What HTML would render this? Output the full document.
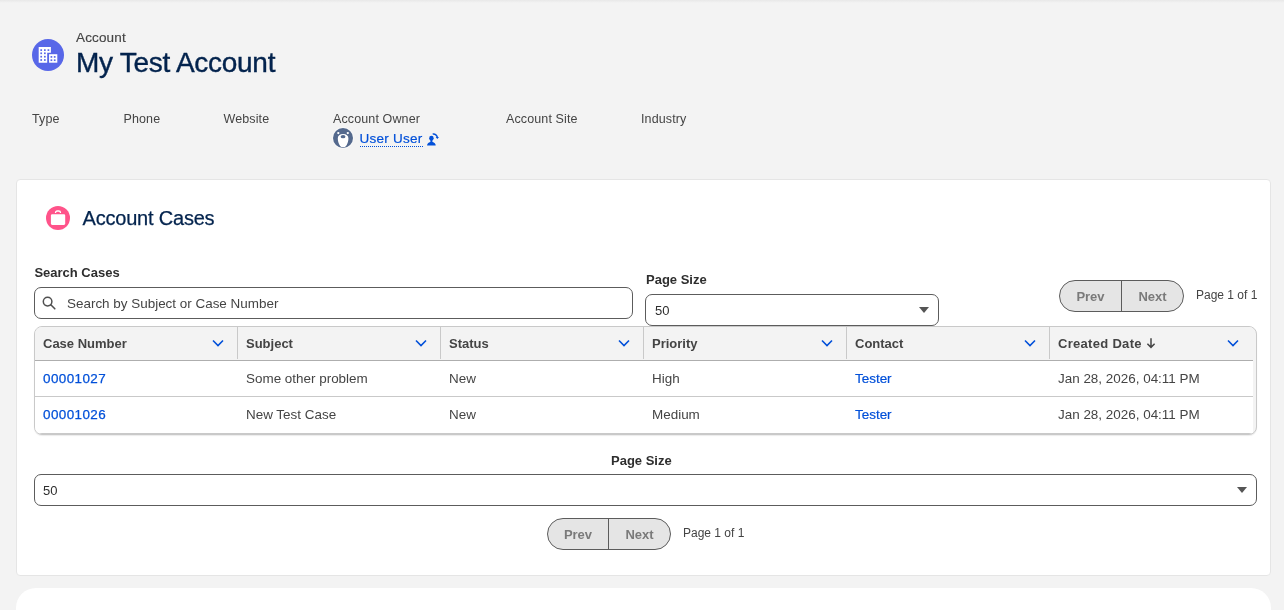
<!DOCTYPE html>
<html lang="en">
<head>
<meta charset="utf-8">
<title>My Test Account | Account</title>
<style>
*{box-sizing:border-box;margin:0;padding:0}
html,body{width:1284px;height:610px;overflow:hidden}
body{background:#f3f3f3;font-family:"Liberation Sans",sans-serif;color:#444;position:relative;font-size:13px}
.abs{position:absolute;white-space:nowrap}
.topshade{position:absolute;left:0;top:0;width:1284px;height:3px;background:linear-gradient(#e8e8e8,#f3f3f3)}
/* record header */
.hicon{left:32px;top:39px;width:32px;height:32px;border-radius:50%;background:#5867e8}
.entity{left:76px;top:30px;font-size:13.500px;letter-spacing:.15px;line-height:16px;color:#444;-webkit-text-stroke:.15px #444}
.title{left:76px;top:46px;font-size:28px;letter-spacing:-.28px;line-height:34px;color:#03234d;-webkit-text-stroke:.4px #03234d}
.flabel{top:112px;font-size:12.5px;letter-spacing:.12px;line-height:15px;color:#444}
.avatar{left:333px;top:128px;width:20px;height:20px;border-radius:50%;background:#54698d;overflow:hidden;box-shadow:0 0 0 1px rgba(255,255,255,.4)}
.owner{left:359.500px;top:130.500px;font-size:13.500px;letter-spacing:.25px;line-height:16px;color:#0250d9;-webkit-text-stroke:.2px #0250d9}
.ownerul{left:360px;top:146px;width:63px;height:0;border-top:1px dotted #0250d9}
/* card */
.card{left:16px;top:179px;width:1255px;height:397px;background:#fff;border:1px solid #e5e5e5;border-radius:4px}
.card2{left:16px;top:588px;width:1255px;height:60px;background:#fff;border-radius:20px}
.cicon{left:46px;top:206px;width:24px;height:24px;border-radius:50%;background:#ff538a}
.ctitle{left:82.500px;top:206px;font-size:20px;letter-spacing:-.2px;line-height:24px;color:#03234d;-webkit-text-stroke:.25px #03234d}
.lbl{font-size:13px;line-height:16px;font-weight:bold;color:#2e2e2e}
.input{background:#fff;border:1px solid #5c5c5c;border-radius:7px}
.ph{font-size:13.450px;line-height:16px;color:#444}
.val{font-size:13px;line-height:16px;color:#2e2e2e}
.caret{width:0;height:0;border-left:5px solid transparent;border-right:5px solid transparent;border-top:6px solid #555}
.bgroup{height:32px;border:1px solid #5c5c5c;border-radius:16px;background:#e5e5e5;overflow:hidden;display:flex}
.bgroup span{display:block;height:30px;line-height:31px;text-align:center;font-size:13px;font-weight:bold;color:#7a7a7a}
.bgroup span+span{border-left:1px solid #5c5c5c}
.pinfo{font-size:12px;line-height:15px;color:#444}
/* table */
.tbl{left:34px;top:326px;width:1223px;height:109px;border:1px solid #c9c9c9;border-radius:8px;background:#f3f3f3;overflow:hidden;box-shadow:0 1px 1px rgba(0,0,0,.08)}
.thead{left:0;top:0;width:1218px;height:34px;background:#f3f3f3;border-bottom:1px solid #aeaeae}
.th{top:0;height:32px;width:203px;font-size:13px;line-height:33px;font-weight:bold;color:#444;padding-left:8px}
.th+.th{border-left:1px solid #c9c9c9}
.chev{position:absolute;right:13px;top:10px;width:12px;height:12px}
.row{left:0;width:1218px;height:36px;border-bottom:1px solid #c9c9c9;background:#fff}
.td{top:0;height:35px;line-height:35px;font-size:13.450px;color:#444;padding-left:8px}
.td a{color:#0250d9;text-decoration:none;-webkit-text-stroke:.2px #0250d9}
.td a.cn{letter-spacing:.42px;-webkit-text-stroke:.25px #0250d9}
</style>
</head>
<body>
<div id="root" style="position:absolute;left:0;top:0;width:1284px;height:610px;will-change:transform">
<div class="topshade"></div>

<!-- Record header -->
<div class="abs hicon">
<svg width="32" height="32" viewBox="0 0 32 32"><path fill="#fff" d="M6.700 8.100H18.900V13.700H15.200V23.700H6.700z"/><rect fill="#fff" x="17.050" y="15.200" width="8.250" height="8.500"/><g fill="#5867e8"><rect x="8.35" y="10.25" width="1.7" height="1.7"/><rect x="12.00" y="10.25" width="1.7" height="1.7"/><rect x="15.55" y="10.25" width="1.7" height="1.7"/><rect x="8.35" y="13.45" width="1.7" height="1.7"/><rect x="12.00" y="13.45" width="1.7" height="1.7"/><rect x="8.35" y="16.85" width="1.7" height="1.7"/><rect x="12.00" y="16.85" width="1.7" height="1.7"/><rect x="8.35" y="20.15" width="1.7" height="1.7"/><rect x="12.00" y="20.15" width="1.7" height="1.7"/><rect x="18.55" y="17.05" width="1.7" height="1.7"/><rect x="21.85" y="17.05" width="1.7" height="1.7"/><rect x="18.55" y="20.35" width="1.7" height="1.7"/><rect x="21.85" y="20.35" width="1.7" height="1.7"/></g></svg>
</div>
<div class="abs entity">Account</div>
<h1 class="abs title" style="font-weight:normal">My Test Account</h1>

<div class="abs flabel" style="left:32px">Type</div>
<div class="abs flabel" style="left:123.500px">Phone</div>
<div class="abs flabel" style="left:223.500px">Website</div>
<div class="abs flabel" style="left:333px">Account Owner</div>
<div class="abs flabel" style="left:506px">Account Site</div>
<div class="abs flabel" style="left:641px">Industry</div>

<div class="abs avatar">
<svg width="20" height="20" viewBox="0 0 20 20"><circle cx="5.300" cy="5.100" r="1.150" fill="#fff"/><circle cx="14.800" cy="5.100" r="1.150" fill="#fff"/><path fill="#fff" d="M10.100 6.100C13.400 6.100 15.400 7.700 15.400 10.300C15.400 13 14.700 15.200 13.700 17C12.900 18.500 11.700 19.300 10.100 19.300C8.500 19.300 7.300 18.500 6.500 17C5.500 15.200 4.800 13 4.800 10.300C4.800 7.700 6.800 6.100 10.100 6.100z"/><ellipse cx="10.050" cy="8.700" rx="2.400" ry="1.600" fill="#54698d"/></svg>
</div>
<div class="abs owner">User User</div><div class="abs ownerul"></div>
<svg class="abs" style="left:427px;top:133px" width="12" height="13" viewBox="0 0 12 13"><ellipse cx="4.400" cy="5.300" rx="2.250" ry="2.450" fill="#0250d9"/><rect x="3.400" y="7" width="2" height="2.500" fill="#0250d9"/><path fill="#0250d9" d="M.100 12.400C.100 10.500 1.500 9.400 3.200 8.900H5.600C7.300 9.400 8.700 10.500 8.700 12.400z"/><path fill="none" stroke="#0250d9" stroke-width="1.500" d="M5.700 1.100C8.200.700 10.100 2.200 10.400 4.500"/><path fill="#0250d9" d="M8.700 4h3.300l-1.700 2.100z"/></svg>

<!-- Card -->
<div class="abs card"></div>
<div class="abs card2"></div>
<div class="abs cicon">
<svg width="24" height="24" viewBox="0 0 24 24"><rect x="4.900" y="8.200" width="14.300" height="10.700" rx="1.300" fill="#fff"/><path fill="none" stroke="#fff" stroke-width="1.300" d="M9.550 7.100V6.500C9.550 5.500 10.200 5 11.200 5H12.800C13.800 5 14.450 5.500 14.450 6.500V7.100"/></svg>
</div>
<h2 class="abs ctitle" style="font-weight:normal">Account Cases</h2>

<div class="abs lbl" style="left:34.400px;top:265px">Search Cases</div>
<div class="abs input" style="left:34px;top:287px;width:599px;height:32px"></div>
<svg class="abs" style="left:42px;top:296px" width="14" height="14" viewBox="0 0 14 14"><circle cx="5.600" cy="5.600" r="4.300" fill="none" stroke="#505050" stroke-width="1.500"/><path d="M8.800 8.800l4 4" stroke="#505050" stroke-width="1.600" stroke-linecap="round"/></svg>
<div class="abs ph" style="left:67px;top:295.500px">Search by Subject or Case Number</div>

<div class="abs lbl" style="left:646px;top:272px">Page Size</div>
<div class="abs input" style="left:645px;top:294px;width:294px;height:32px"></div>
<div class="abs val" style="left:655px;top:303px">50</div>
<div class="abs caret" style="left:919px;top:307px"></div>

<div class="abs bgroup" style="left:1059px;top:280px;width:125px"><span style="width:61px">Prev</span><span style="width:62px">Next</span></div>
<div class="abs pinfo" style="left:1196px;top:288px">Page 1 of 1</div>

<!-- Table -->
<div class="abs tbl">
  <div class="abs thead">
    <div class="abs th" style="left:0;width:202px">Case Number<svg class="chev" viewBox="0 0 12 12"><path d="M1 3.500l5 5 5-5" fill="none" stroke="#0250d9" stroke-width="1.600"/></svg></div>
    <div class="abs th" style="left:202px">Subject<svg class="chev" viewBox="0 0 12 12"><path d="M1 3.500l5 5 5-5" fill="none" stroke="#0250d9" stroke-width="1.600"/></svg></div>
    <div class="abs th" style="left:405px">Status<svg class="chev" viewBox="0 0 12 12"><path d="M1 3.500l5 5 5-5" fill="none" stroke="#0250d9" stroke-width="1.600"/></svg></div>
    <div class="abs th" style="left:608px">Priority<svg class="chev" viewBox="0 0 12 12"><path d="M1 3.500l5 5 5-5" fill="none" stroke="#0250d9" stroke-width="1.600"/></svg></div>
    <div class="abs th" style="left:811px">Contact<svg class="chev" viewBox="0 0 12 12"><path d="M1 3.500l5 5 5-5" fill="none" stroke="#0250d9" stroke-width="1.600"/></svg></div>
    <div class="abs th" style="left:1014px"><span style="letter-spacing:.3px">Created Date</span><svg style="position:absolute;left:95.500px;top:10px" width="10" height="12" viewBox="0 0 10 12"><path d="M5 1.200v9M1.400 6.800L5 10.400l3.600-3.600" fill="none" stroke="#444" stroke-width="1.500"/></svg><svg class="chev" viewBox="0 0 12 12"><path d="M1 3.500l5 5 5-5" fill="none" stroke="#0250d9" stroke-width="1.600"/></svg></div>
  </div>
  <div class="abs row" style="top:34px">
    <div class="abs td" style="left:0"><a class="cn">00001027</a></div>
    <div class="abs td" style="left:203px">Some other problem</div>
    <div class="abs td" style="left:406px">New</div>
    <div class="abs td" style="left:609px">High</div>
    <div class="abs td" style="left:812px"><a>Tester</a></div>
    <div class="abs td" style="left:1015px">Jan 28, 2026, 04:11 PM</div>
  </div>
  <div class="abs row" style="top:70px;height:37px">
    <div class="abs td" style="left:0"><a class="cn">00001026</a></div>
    <div class="abs td" style="left:203px">New Test Case</div>
    <div class="abs td" style="left:406px">New</div>
    <div class="abs td" style="left:609px">Medium</div>
    <div class="abs td" style="left:812px"><a>Tester</a></div>
    <div class="abs td" style="left:1015px">Jan 28, 2026, 04:11 PM</div>
  </div>
</div>

<!-- Bottom pager -->
<div class="abs lbl" style="left:611px;top:453px">Page Size</div>
<div class="abs input" style="left:34px;top:474px;width:1223px;height:32px"></div>
<div class="abs val" style="left:43px;top:483px">50</div>
<div class="abs caret" style="left:1237px;top:487px"></div>
<div class="abs bgroup" style="left:547px;top:518px;width:124px"><span style="width:60px">Prev</span><span style="width:62px">Next</span></div>
<div class="abs pinfo" style="left:683px;top:526px">Page 1 of 1</div>

</div>
</body>
</html>
